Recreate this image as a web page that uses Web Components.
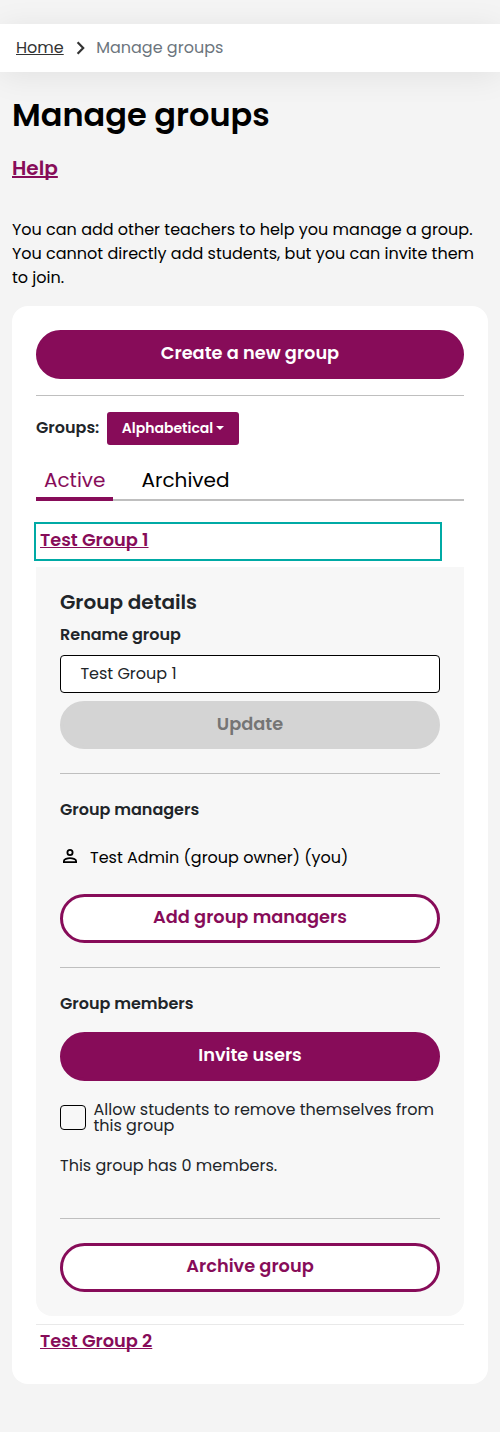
<!DOCTYPE html>
<html lang="en">
<head>
<meta charset="utf-8">
<title>Manage groups</title>
<style>
html,body{margin:0;background:#f4f4f4}
body{font:400 16px/24px Poppins,Inter,sans-serif;color:#212529;--brand:#870c59;--rule:#bfbfbf}
</style>
</head>
<body>
<groups-page></groups-page>

<template id="crumbs-t">
<style>
:host{display:flex;align-items:center;height:48px;padding:0 16px;background:#fff;box-shadow:0 4px 32px rgba(0,0,0,.08);box-sizing:border-box}
a{color:#333;text-decoration:underline;text-underline-offset:1px;text-decoration-thickness:1px;text-decoration-skip-ink:none}
svg{margin:0 11.5px 0 12px;width:9px;height:14px;flex:none}
.here{color:#6c757d}
</style>
<a>Home</a>
<svg viewBox="0 0 9 14" fill="none" stroke="#333" stroke-width="2.2"><path d="M1.6 1.3L7.2 7l-5.6 5.7"/></svg>
<span class="here">Manage groups</span>
</template>

<template id="button-t">
<style>
:host{display:block}
button{display:flex;align-items:center;justify-content:center;width:100%;height:49px;box-sizing:border-box;margin:0;padding:0 0 4px;border:3px solid var(--brand);border-radius:25px;background:var(--brand);color:#fff;font:600 17.76px/27px Poppins,Inter,sans-serif}
:host([outline]) button{background:#fff;color:var(--brand)}
:host([off]) button{height:48px;background:#d4d4d4;border-color:#d4d4d4;color:#757575;padding-bottom:3px}
</style>
<button><slot></slot></button>
</template>

<template id="tabs-t">
<style>
:host{display:flex;height:41px;font-size:20px;line-height:30px;color:#000;box-shadow:inset 0 -2px var(--rule)}
span{box-sizing:border-box;height:41px;padding:4.5px 8px 0}
.on{color:var(--brand);border-bottom:4px solid var(--brand);width:77px;margin-right:20.5px}
</style>
<span class="on">Active</span><span>Archived</span>
</template>

<template id="link-t">
<style>
:host{display:block;box-sizing:border-box;width:404px;height:35px;padding:2px 4px 0;color:var(--brand);font-size:17.76px;font-weight:600;line-height:27px;text-decoration:underline;text-decoration-thickness:1px;text-underline-offset:1px;text-decoration-skip-ink:none}
:host([focused]){outline:2px solid #00aaa5}
</style>
<a><slot></slot></a>
</template>

<template id="details-t">
<style>
:host{display:block;box-sizing:border-box;height:749px;padding:20px 24px 0;background:#f7f7f7;border-radius:0 0 16px 16px}
h4,h5,p{margin:0;font-weight:600;font-size:16px;line-height:24px}
h4{font-size:20px;line-height:30px}
h5.rename{margin:6px 0 8px}
.input{box-sizing:border-box;height:38px;margin-bottom:8px;padding:6px 19.4px;border:1px solid #000;border-radius:4px;background:#fff}
hr{border:0;height:1px;background:var(--rule);margin:24px 0}
p{font-weight:400}
.owner{display:flex;align-items:center;color:#000;margin:24px 0}
.owner svg{width:20px;height:20px;margin-right:10px;position:relative;top:-2px}
.check{display:flex;align-items:center;margin:21px 0 20px}
.check i{box-sizing:border-box;width:26px;height:25px;margin-bottom:1px;border:1px solid #000;border-radius:4px;margin-right:7.5px;flex:none}
.check div{line-height:16px}
h5.members{margin-bottom:16px}
</style>
<h4>Group details</h4>
<h5 class="rename">Rename group</h5>
<div class="input">Test Group 1</div>
<pill-button off>Update</pill-button>
<hr>
<h5>Group managers</h5>
<p class="owner"><svg viewBox="0 0 20 20" fill="none" stroke="#000" stroke-width="1.8"><circle cx="10" cy="6.5" r="2.6"/><path d="M3.9 16.1v-1.2c0-1.8 3.6-2.8 6.1-2.8s6.1 1 6.1 2.8v1.2z"/></svg>Test Admin (group owner) (you)</p>
<pill-button outline>Add group managers</pill-button>
<hr>
<h5 class="members">Group members</h5>
<pill-button>Invite users</pill-button>
<div class="check"><i></i><div>Allow students to remove themselves from this group</div></div>
<p>This group has 0 members.</p>
<hr style="margin:40px 0 24px">
<pill-button outline>Archive group</pill-button>
</template>

<template id="page-t">
<style>
:host{display:block;box-sizing:border-box;height:1432px;padding-top:24px}
main{padding:19px 12px 0}
h1{margin:0;font-size:32px;line-height:48px;font-weight:600;color:#000}
.help{display:block;margin:14px 0 35px;font-size:20px;line-height:30px;font-weight:600;color:var(--brand);text-decoration:underline;text-decoration-thickness:2px;text-underline-offset:1px;text-decoration-skip-ink:none}
p{margin:0 0 16px;color:#000}
section{box-sizing:border-box;height:1078px;padding:24px;background:#fff;border-radius:16px}
hr{border:0;height:1px;margin:16px 0;background:var(--rule)}
.sort{display:flex;height:33px;gap:8px}
.sort>label{font-weight:600;line-height:31px}
.menu{display:flex;box-sizing:border-box;width:132px;height:33px;padding:0 14.5px;border-radius:3px;background:var(--brand);color:#fff;font-size:14px;font-weight:600;line-height:32px}
.menu::after{content:"";margin:14px 0 0 3px;height:0;border:4px solid transparent;border-top-color:#fff;border-bottom:0}
page-tabs{margin:15px 0 23px}
group-details{margin:8px 0}
.thin{margin:8px 0 0;background:#e9e9e9}
</style>
<bread-crumbs></bread-crumbs>
<main>
<h1>Manage groups</h1>
<a class="help">Help</a>
<p>You can add other teachers to help you manage a group. You cannot directly add students, but you can invite them to join.</p>
<section>
<pill-button>Create a new group</pill-button>
<hr>
<div class="sort"><label>Groups:</label><div class="menu">Alphabetical</div></div>
<page-tabs></page-tabs>
<group-link focused>Test Group 1</group-link>
<group-details></group-details>
<hr class="thin">
<group-link>Test Group 2</group-link>
</section>
</main>
</template>

<script>
function define(name, id) {
  customElements.define(name, class extends HTMLElement {
    constructor() {
      super();
      this.attachShadow({ mode: 'open' }).append(document.getElementById(id).content.cloneNode(true));
    }
  });
}
define('groups-page', 'page-t');
define('bread-crumbs', 'crumbs-t');
define('pill-button', 'button-t');
define('page-tabs', 'tabs-t');
define('group-link', 'link-t');
define('group-details', 'details-t');
</script>
</body>
</html>
